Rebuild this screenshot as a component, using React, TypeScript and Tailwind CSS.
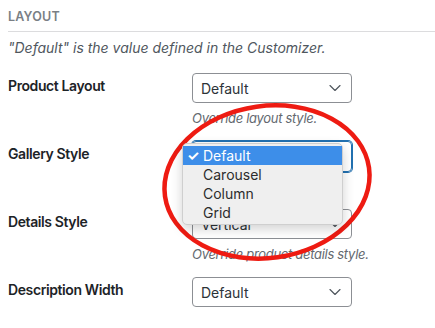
import { ChevronDown } from "lucide-react";

const rows = [
  { label: "Product Layout", value: "Default", note: "Override layout style." },
  { label: "Gallery Style", value: "Default", note: "Override gallery style.", open: true },
  { label: "Details Style", value: "Vertical", note: "Override product details style." },
  { label: "Description Width", value: "Default", note: "" },
];

function Select({ value, focused }: { value: string; focused?: boolean }) {
  return (
    <div
      className={
        focused
          ? "flex h-[31px] w-[160px] items-center justify-between rounded-[4px] border border-[#2271b1] pl-[8px] pr-[6px] shadow-[0_0_0_1px_#2271b1]"
          : "flex h-[30px] w-[160px] items-center justify-between rounded-[4px] border border-[#8c8f94] pl-[8px] pr-[6px]"
      }
    >
      <span className="text-[14px] text-[#2c3338]">{value}</span>
      <ChevronDown size={20} strokeWidth={1.4} className="text-[#50575e]" />
    </div>
  );
}

function Dropdown() {
  const items = ["Default", "Carousel", "Column", "Grid"];
  return (
    <div className="absolute left-[-10px] top-[2px] z-10 w-[161px] rounded-[5px] border border-[#cfcfcf] bg-[#efefef] py-[2px] shadow-[0_4px_12px_rgba(0,0,0,0.18)]">
      {items.map((it, i) => (
        <div
          key={it}
          className={
            i === 0
              ? "flex h-[19px] items-center bg-[#3d8ee9] text-[14px] text-white"
              : "flex h-[19px] items-center text-[14px] text-[#2c2c2c]"
          }
        >
          <span className="w-[20px] pl-[4px] text-[14px] font-bold">{i === 0 ? "✓" : ""}</span>
          <span>{it}</span>
        </div>
      ))}
    </div>
  );
}

export default function App() {
  return (
    <div className="relative h-[328px] w-[435px] overflow-hidden bg-white font-['Inter',sans-serif]">
      <div className="pl-[8px] pt-[10px]">
        <h2 className="text-[12.5px] font-semibold leading-[14px] tracking-[0.2px] text-[#7a7f85]">LAYOUT</h2>
        <div className="mt-[7px] h-px bg-[#dcdcde]" />
        <p className="mt-[8px] text-[14px] italic leading-[16px] text-[#50575e]">
          "Default" is the value defined in the Customizer.
        </p>
        <div className="mt-[17px] flex flex-col">
          {rows.map((r) => (
            <div key={r.label} className="flex h-[68px]">
              <div className="w-[184px] pt-[4px] text-[14px] font-semibold leading-[18px] tracking-[-0.4px] text-[#1d2327]">
                {r.label}
              </div>
              <div className="relative">
                <Select value={r.value} focused={r.open} />
                {r.note && (
                  <p className="mt-[7px] text-[13px] italic leading-[16px] tracking-[-0.3px] text-[#646970]">{r.note}</p>
                )}
                {r.open && <Dropdown />}
              </div>
            </div>
          ))}
        </div>
      </div>
      <svg className="pointer-events-none absolute left-0 top-0" width="435" height="328">
        <ellipse
          cx="267"
          cy="182"
          rx="103"
          ry="76"
          transform="rotate(-8 267 182)"
          fill="none"
          stroke="#ee1b12"
          strokeWidth="4.5"
        />
      </svg>
    </div>
  );
}
